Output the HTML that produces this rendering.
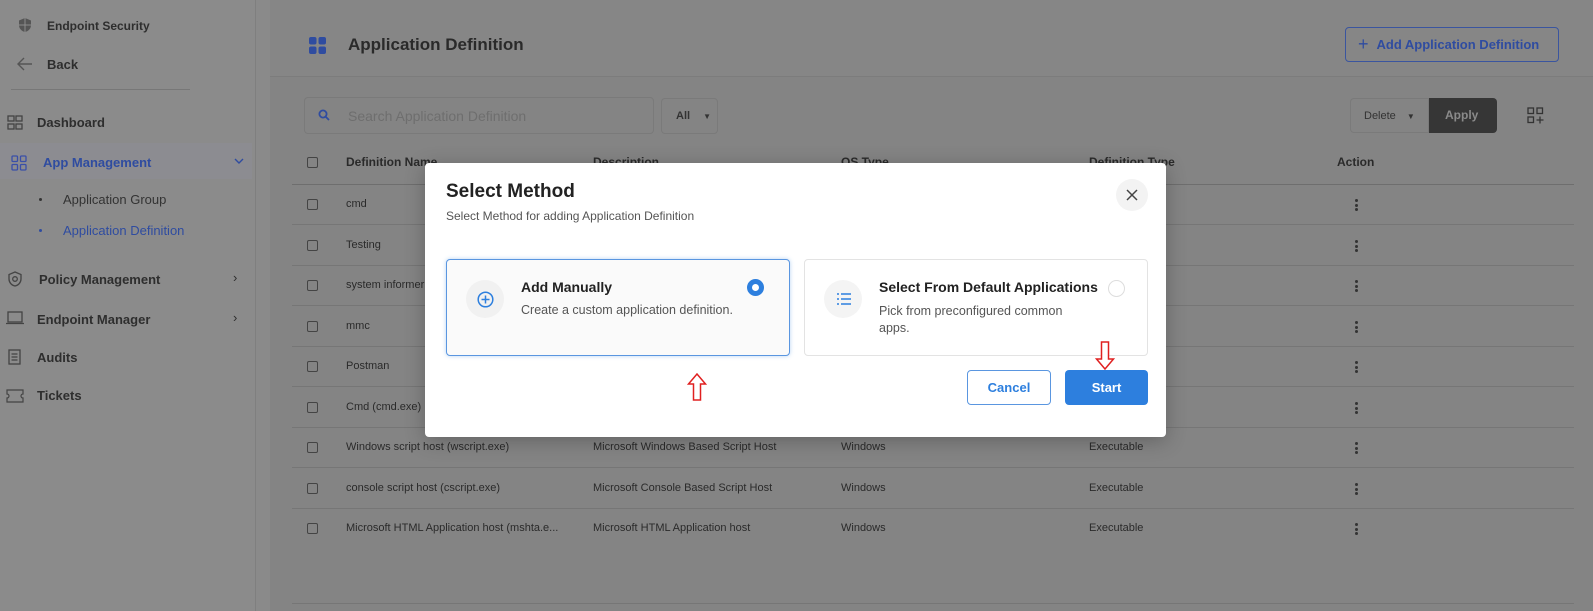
<!DOCTYPE html>
<html><head><meta charset="utf-8"><style>
*{box-sizing:border-box;margin:0;padding:0}
body{width:1593px;height:611px;overflow:hidden;font-family:"Liberation Sans",sans-serif;background:#8a8a8a;position:relative;color:#2a2a2a}
.abs{position:absolute}
.side{left:0;top:0;width:256px;height:611px;background:#8b8b8b;border-right:1px solid #7f7f7f}
.side .t{position:absolute;font-size:13px;font-weight:bold;color:#2e2e2e}
.main{left:270px;top:0;width:1323px;height:611px;background:#848484}
.hdr{left:270px;top:0;width:1323px;height:77px;background:#868686;border-bottom:1px solid #7c7c7c}
.row{position:absolute;left:292px;width:1282px;height:1px;background:#767676}
.cb{position:absolute;left:307px;width:11px;height:11px;border:1px solid #444;border-radius:2px}
.cell{position:absolute;font-size:11px;color:#2a2a2a}
.dots{position:absolute;left:1355px;width:3px}
.dots i{display:block;width:3px;height:3px;background:#333;border-radius:50%;margin-bottom:1.5px}
.modal{left:425px;top:163px;width:741px;height:274px;background:#fff;border-radius:4px;box-shadow:0 4px 20px rgba(0,0,0,.25)}
.card{position:absolute;top:96px;width:344px;height:97px;border-radius:4px}
</style></head><body>
<div class="abs side">
  <svg class="abs" style="left:18px;top:17px" width="14" height="16" viewBox="0 0 14 16"><path d="M7 1L1 3.5V8c0 3.5 2.6 6.3 6 7 3.4-.7 6-3.5 6-7V3.5z" fill="#555"/><path d="M7 1v14M1 8h12" stroke="#8b8b8b" stroke-width="1"/></svg>
  <div class="t" style="left:47px;top:19px;font-size:12px">Endpoint Security</div>
  <svg class="abs" style="left:17px;top:57px" width="16" height="14" viewBox="0 0 16 14"><path d="M15 7H2M7 1L1 7l6 6" stroke="#555" stroke-width="1.4" fill="none"/></svg>
  <div class="t" style="left:47px;top:57px">Back</div>
  <div class="abs" style="left:11px;top:89px;width:179px;height:1px;background:#777"></div>
  <svg class="abs" style="left:7px;top:115px" width="16" height="16" viewBox="0 0 16 16" fill="none" stroke="#444" stroke-width="1.3"><rect x="1" y="1" width="6" height="5"/><rect x="9" y="1" width="6" height="5"/><rect x="1" y="9" width="6" height="5"/><rect x="9" y="9" width="6" height="5"/></svg>
  <div class="t" style="left:37px;top:115px">Dashboard</div>
  <div class="abs" style="left:0;top:143px;width:252px;height:36px;background:#8c8c91"></div>
  <svg class="abs" style="left:11px;top:155px" width="16" height="16" viewBox="0 0 16 16" fill="none" stroke="#3a4fa8" stroke-width="1.3"><rect x="1" y="1" width="5.5" height="5.5" rx="1"/><rect x="9.5" y="1" width="5.5" height="5.5" rx="1"/><rect x="1" y="9.5" width="5.5" height="5.5" rx="1"/><rect x="9.5" y="9.5" width="5.5" height="5.5" rx="1"/></svg>
  <div class="t" style="left:43px;top:155px;color:#2f4ca0">App Management</div>
  <svg class="abs" style="left:234px;top:158px" width="10" height="6" viewBox="0 0 10 6"><path d="M1 1l4 4 4-4" stroke="#2f4ca0" stroke-width="1.4" fill="none"/></svg>
  <div class="abs" style="left:39px;top:198px;width:3px;height:3px;background:#333;border-radius:50%"></div>
  <div class="t" style="left:63px;top:192px;font-weight:normal;color:#333">Application Group</div>
  <div class="abs" style="left:39px;top:229px;width:3px;height:3px;background:#2f4ca0;border-radius:50%"></div>
  <div class="t" style="left:63px;top:223px;font-weight:normal;color:#2f4ca0">Application Definition</div>
  <svg class="abs" style="left:8px;top:271px" width="14" height="16" viewBox="0 0 14 16" fill="none" stroke="#444" stroke-width="1.3"><path d="M7 1L1 3.5V8c0 3.5 2.6 6.3 6 7 3.4-.7 6-3.5 6-7V3.5z"/><circle cx="7" cy="8" r="2.3"/></svg>
  <div class="t" style="left:39px;top:272px">Policy Management</div>
  <div class="t" style="left:233px;top:270px;font-weight:normal">›</div>
  <svg class="abs" style="left:5px;top:311px" width="20" height="14" viewBox="0 0 20 14" fill="none" stroke="#444" stroke-width="1.3"><rect x="3" y="1" width="14" height="10"/><path d="M1 12.5h18"/></svg>
  <div class="t" style="left:37px;top:312px">Endpoint Manager</div>
  <div class="t" style="left:233px;top:310px;font-weight:normal">›</div>
  <svg class="abs" style="left:8px;top:349px" width="13" height="16" viewBox="0 0 13 16" fill="none" stroke="#444" stroke-width="1.3"><rect x="1" y="1" width="11" height="14"/><path d="M3.5 5h6M3.5 8h6M3.5 11h6"/></svg>
  <div class="t" style="left:37px;top:350px">Audits</div>
  <svg class="abs" style="left:6px;top:389px" width="18" height="14" viewBox="0 0 18 14" fill="none" stroke="#444" stroke-width="1.2"><path d="M1 1h16v4a2 2 0 000 4v4H1V9a2 2 0 000-4z"/></svg>
  <div class="t" style="left:37px;top:388px">Tickets</div>
</div>
<div class="abs main"></div>
<div class="abs hdr"></div>
<svg class="abs" style="left:309px;top:37px" width="17" height="17" viewBox="0 0 17 17" fill="#2f4ca0"><rect x="0" y="0" width="7.5" height="7.5" rx="2"/><rect x="9.5" y="0" width="7.5" height="7.5" rx="2"/><rect x="0" y="9.5" width="7.5" height="7.5" rx="2"/><rect x="9.5" y="9.5" width="7.5" height="7.5" rx="2"/></svg>
<div class="abs" style="left:348px;top:35px;font-size:17px;font-weight:bold;color:#2a2a2a">Application Definition</div>
<div class="abs" style="left:1345px;top:27px;width:214px;height:35px;border:1px solid #3a559f;border-radius:4px;font-size:13px;font-weight:bold;color:#2f4ca0;padding:0 0 0 12px;line-height:33px;white-space:nowrap"><span style="font-weight:normal;font-size:18px;margin-right:8px;vertical-align:-1px">+</span>Add Application Definition</div>
<div class="abs" style="left:304px;top:97px;width:350px;height:37px;border:1px solid #7a7a7a;border-radius:4px"></div>
<svg class="abs" style="left:318px;top:109px" width="12" height="12" viewBox="0 0 12 12" fill="none" stroke="#2f4ca0" stroke-width="1.8"><circle cx="5" cy="5" r="3.6"/><path d="M7.7 7.7L11 11"/></svg>
<div class="abs" style="left:348px;top:108px;font-size:14px;color:#6e6e6e">Search Application Definition</div>
<div class="abs" style="left:661px;top:98px;width:57px;height:36px;border:1px solid #7a7a7a;border-radius:4px;font-size:11px;font-weight:bold;color:#333;padding:11px 0 0 14px">All <span style="font-size:8px;margin-left:10px">▼</span></div>
<div class="abs" style="left:1350px;top:98px;width:79px;height:35px;border:1px solid #7a7a7a;border-radius:4px 0 0 4px;font-size:11px;color:#333;padding:11px 0 0 13px">Delete <span style="font-size:8px;margin-left:8px">▼</span></div>
<div class="abs" style="left:1429px;top:98px;width:68px;height:35px;background:#363636;border-radius:0 4px 4px 0;font-size:12px;color:#8a8a8a;padding:10px 0 0 16px;font-weight:bold">Apply</div>
<svg class="abs" style="left:1527px;top:107px" width="17" height="17" viewBox="0 0 17 17" fill="none" stroke="#333" stroke-width="1.3"><rect x="1" y="1" width="5.5" height="5.5"/><rect x="10" y="1" width="5.5" height="5.5"/><rect x="1" y="10" width="5.5" height="5.5"/><path d="M13 9.5v7M9.5 13h7"/></svg>
<div class="cb" style="top:157px"></div>
<div class="cell" style="left:346px;top:155px;font-weight:bold;font-size:12px">Definition Name</div>
<div class="cell" style="left:593px;top:155px;font-weight:bold;font-size:12px">Description</div>
<div class="cell" style="left:841px;top:155px;font-weight:bold;font-size:12px">OS Type</div>
<div class="cell" style="left:1089px;top:155px;font-weight:bold;font-size:12px">Definition Type</div>
<div class="cell" style="left:1337px;top:155px;font-weight:bold;font-size:12px">Action</div>
<div class="row" style="top:184px;background:#6e6e6e"></div>

<div class="cb" style="top:199px"></div><div class="cell" style="left:346px;top:198px">cmd</div><div class="dots" style="top:199px"><i></i><i></i><i></i></div><div class="row" style="top:224px"></div>
<div class="cb" style="top:240px"></div><div class="cell" style="left:346px;top:239px">Testing</div><div class="dots" style="top:240px"><i></i><i></i><i></i></div><div class="row" style="top:265px"></div>
<div class="cb" style="top:280px"></div><div class="cell" style="left:346px;top:279px">system informer</div><div class="dots" style="top:280px"><i></i><i></i><i></i></div><div class="row" style="top:305px"></div>
<div class="cb" style="top:321px"></div><div class="cell" style="left:346px;top:320px">mmc</div><div class="dots" style="top:321px"><i></i><i></i><i></i></div><div class="row" style="top:346px"></div>
<div class="cb" style="top:361px"></div><div class="cell" style="left:346px;top:360px">Postman</div><div class="dots" style="top:361px"><i></i><i></i><i></i></div><div class="row" style="top:386px"></div>
<div class="cb" style="top:402px"></div><div class="cell" style="left:346px;top:401px">Cmd (cmd.exe)</div><div class="dots" style="top:402px"><i></i><i></i><i></i></div><div class="row" style="top:427px"></div>
<div class="cb" style="top:442px"></div><div class="cell" style="left:346px;top:441px">Windows script host (wscript.exe)</div><div class="cell" style="left:593px;top:441px">Microsoft Windows Based Script Host</div><div class="cell" style="left:841px;top:441px">Windows</div><div class="cell" style="left:1089px;top:441px">Executable</div><div class="dots" style="top:442px"><i></i><i></i><i></i></div><div class="row" style="top:467px"></div>
<div class="cb" style="top:483px"></div><div class="cell" style="left:346px;top:482px">console script host (cscript.exe)</div><div class="cell" style="left:593px;top:482px">Microsoft Console Based Script Host</div><div class="cell" style="left:841px;top:482px">Windows</div><div class="cell" style="left:1089px;top:482px">Executable</div><div class="dots" style="top:483px"><i></i><i></i><i></i></div><div class="row" style="top:508px"></div>
<div class="cb" style="top:523px"></div><div class="cell" style="left:346px;top:522px">Microsoft HTML Application host (mshta.e...</div><div class="cell" style="left:593px;top:522px">Microsoft HTML Application host</div><div class="cell" style="left:841px;top:522px">Windows</div><div class="cell" style="left:1089px;top:522px">Executable</div><div class="dots" style="top:523px"><i></i><i></i><i></i></div>
<div class="row" style="top:603px"></div>

<div class="abs modal">
  <div class="abs" style="left:21px;top:18px;font-size:19px;font-weight:bold;color:#222">Select Method</div>
  <div class="abs" style="left:21px;top:46px;font-size:12px;color:#555">Select Method for adding Application Definition</div>
  <div class="abs" style="left:691px;top:16px;width:32px;height:32px;border-radius:50%;background:#f3f3f3"></div>
  <svg class="abs" style="left:701px;top:26px" width="12" height="12" viewBox="0 0 12 12"><path d="M1 1l10 10M11 1L1 11" stroke="#444" stroke-width="1.5"/></svg>
  <div class="card" style="left:21px;border:1px solid #5a96e0;background:#fafafa;box-shadow:0 0 4px rgba(74,144,226,.4)">
    <div class="abs" style="left:19px;top:20px;width:38px;height:38px;border-radius:50%;background:#f1f1f1"></div>
    <svg class="abs" style="left:30px;top:31px" width="17" height="17" viewBox="0 0 17 17" fill="none" stroke="#2d7fde" stroke-width="1.5"><circle cx="8.5" cy="8.5" r="7.3"/><path d="M8.5 4.5v8M4.5 8.5h8"/></svg>
    <div class="abs" style="left:74px;top:19px;font-size:14px;font-weight:bold;color:#222">Add Manually</div>
    <div class="abs" style="left:74px;top:43px;font-size:12.5px;color:#555">Create a custom application definition.</div>
    <div class="abs" style="left:300px;top:19px;width:17px;height:17px;border-radius:50%;border:5px solid #2d7fde;background:#fff"></div>
  </div>
  <div class="card" style="left:379px;border:1px solid #e3e3e3;background:#fff">
    <div class="abs" style="left:19px;top:20px;width:38px;height:38px;border-radius:50%;background:#f4f4f4"></div>
    <svg class="abs" style="left:31px;top:32px" width="16" height="14" viewBox="0 0 16 14" stroke="#2d7fde" stroke-width="1.6"><path d="M1 2h2M5 2h10M1 7h2M5 7h10M1 12h2M5 12h10"/></svg>
    <div class="abs" style="left:74px;top:19px;font-size:14px;font-weight:bold;color:#222">Select From Default Applications</div>
    <div class="abs" style="left:74px;top:43px;font-size:12.5px;color:#555;width:200px;line-height:17px">Pick from preconfigured common apps.</div>
    <div class="abs" style="left:303px;top:20px;width:17px;height:17px;border-radius:50%;border:1px solid #ddd"></div>
  </div>
  <div class="abs" style="left:542px;top:207px;width:84px;height:35px;border:1px solid #5a96e0;border-radius:4px;font-size:13px;color:#2d7fde;text-align:center;line-height:33px;font-weight:bold">Cancel</div>
  <div class="abs" style="left:640px;top:207px;width:83px;height:35px;background:#2d7fde;border-radius:4px;font-size:13px;color:#fff;text-align:center;line-height:35px;font-weight:bold">Start</div>
  <svg class="abs" style="left:262px;top:210px" width="20" height="28" viewBox="0 0 20 28"><path d="M10 1L1.5 11H6.5V27H13.5V11H18.5Z" fill="#fff" stroke="#e02020" stroke-width="1.5"/></svg>
  <svg class="abs" style="left:670px;top:178px" width="20" height="29" viewBox="0 0 20 29"><path d="M10 28L1.5 18H6.5V1H13.5V18H18.5Z" fill="#fff" stroke="#e02020" stroke-width="1.5"/></svg>
</div>
</body></html>
